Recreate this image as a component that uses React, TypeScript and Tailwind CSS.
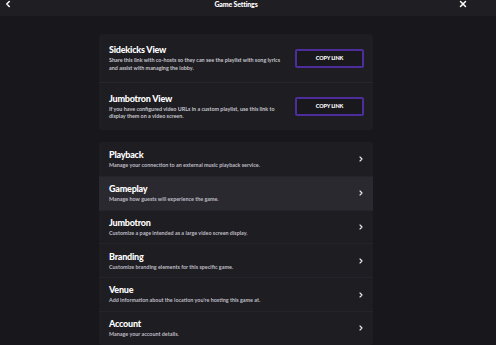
import React from "react";
import { ChevronLeft, ChevronRight, X } from "lucide-react";

interface SettingRow {
  title: string;
  description: string;
  active?: boolean;
}

const shareViews = [
  {
    title: "Sidekicks View",
    lines: [
      "Share this link with co-hosts so they can see the playlist with song lyrics",
      "and assist with managing the lobby.",
    ],
  },
  {
    title: "Jumbotron View",
    lines: [
      "If you have configured video URLs in a custom playlist, use this link to",
      "display them on a video screen.",
    ],
  },
];

const settingRows: SettingRow[] = [
  { title: "Playback", description: "Manage your connection to an external music playback service." },
  { title: "Gameplay", description: "Manage how guests will experience the game.", active: true },
  { title: "Jumbotron", description: "Customize a page intended as a large video screen display." },
  { title: "Branding", description: "Customize branding elements for this specific game." },
  { title: "Venue", description: "Add information about the location you're hosting this game at." },
  { title: "Account", description: "Manage your account details." },
];

const App: React.FC = () => {
  return (
    <div className="w-[496px] h-[345px] overflow-hidden bg-[#18171c] text-white font-['Lato','Open_Sans',sans-serif]">
      {/* header, cut off at the top */}
      <header className="h-[16px] bg-[#1f1e23] flex items-start">
        <div className="w-[24px] pl-[3px] -mt-[1px]">
          <ChevronLeft size={10} strokeWidth={3.5} />
        </div>
        <h1 className="flex-1 text-center text-[7px] leading-[8px] font-black tracking-tight">
          Game Settings
        </h1>
        <div className="w-[48px] pl-[10px] -mt-[1px]">
          <X size={10} strokeWidth={3.5} />
        </div>
      </header>

      <div className="w-[472px] pt-[18px]">
        <div className="w-[274px] mx-auto rounded-[3px] bg-[#1e1d22]">
          {shareViews.map((view, i) => (
            <div
              key={view.title}
              className={`h-[48px] flex items-center justify-between pl-[10px] pr-[9px] ${
                i > 0 ? "border-t border-[#27262b]" : ""
              }`}
            >
              <div>
                <h2 className="text-[9px] leading-[12px] font-black tracking-tight">{view.title}</h2>
                <p className="text-[5.4px] leading-[7.5px] text-[#c4c3ca] font-bold mt-[1px] whitespace-nowrap">
                  {view.lines[0]}
                  <br />
                  {view.lines[1]}
                </p>
              </div>
              <button className="w-[69px] h-[19px] border-2 border-solid border-[#4d2d9c] rounded-[2px] bg-[#19181d] text-[5.5px] font-black tracking-tight text-white">
                COPY LINK
              </button>
            </div>
          ))}
        </div>

        <div className="w-[274px] mx-auto mt-[12px] rounded-[3px] bg-[#1e1d22] overflow-hidden">
          {settingRows.map((row, i) => (
            <div
              key={row.title}
              className={`h-[33.8px] flex items-center justify-between pl-[10px] pr-[8px] ${
                i > 0 ? "border-t border-[#25242a]" : ""
              } ${row.active ? "bg-[#2a292f]" : ""}`}
            >
              <div>
                <h3 className="text-[9px] leading-[12px] font-black tracking-tight">{row.title}</h3>
                <p className="text-[5.4px] leading-[7.5px] text-[#bdbcc3] font-bold mt-[1px]">
                  {row.description}
                </p>
              </div>
              <ChevronRight size={8} strokeWidth={3.5} className="text-[#e8e8ec]" />
            </div>
          ))}
        </div>
      </div>
    </div>
  );
};

export default App;
